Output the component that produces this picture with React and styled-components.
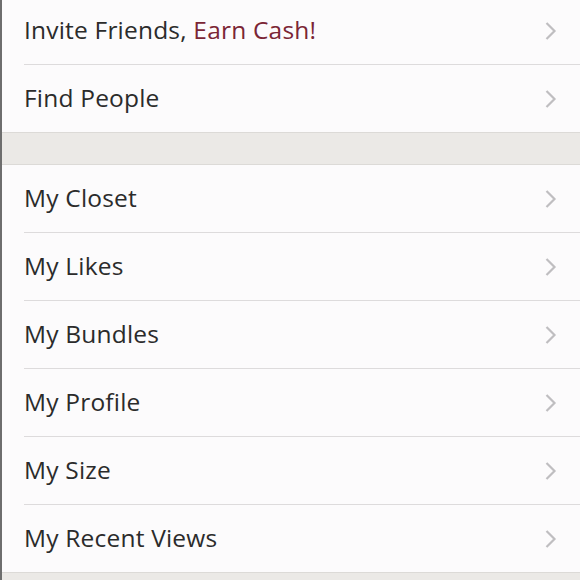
import React from 'react';
import styled, { createGlobalStyle } from 'styled-components';

const GlobalStyle = createGlobalStyle`
  html, body {
    margin: 0;
    padding: 0;
    background: #fcfbfc;
  }
  body {
    font-family: "Open Sans", "Liberation Sans", sans-serif;
    -webkit-font-smoothing: antialiased;
  }
`

const Screen = styled.div`
  width: 580px;
  height: 580px;
  overflow: hidden;
  box-sizing: border-box;
  border-left: 2px solid #6e6e6e;
  background: #fcfbfc;
  display: flex;
  flex-direction: column;
`

const Group = styled.div`
  display: flex;
  flex-direction: column;
  background: #fcfbfc;
  &:first-child {
    margin-top: -3px;
  }
`

const Spacer = styled.div`
  height: 31px;
  flex-shrink: 0;
  background-color: #ebe9e6;
  border-top: 1px solid #dcdad7;
  border-bottom: 1px solid #dcdad7;
`

const Row = styled.div`
  display: flex;
  align-items: center;
  height: 67px;
  flex-shrink: 0;
  padding-left: 22px;
  border-bottom: ${p => (p.last ? 'none' : '1px solid transparent')};
  position: relative;
  &::after {
    content: "";
    display: ${p => (p.last ? 'none' : 'block')};
    position: absolute;
    left: 22px;
    right: 0;
    bottom: -1px;
    height: 1px;
    background: #dddbdc;
  }
`

const Label = styled.div`
  flex: 1;
  font-size: 24.5px;
  color: #2b2b2b;
  letter-spacing: 0.2px;
  padding-bottom: 2px;
`

const Accent = styled.span`
  color: #7b2535;
`

const Chevron = styled.svg`
  width: 13px;
  height: 18px;
  margin-right: 23px;
  flex-shrink: 0;
`

const Arrow = () => (
  <Chevron viewBox="0 0 13 18">
    <path d="M2.5 1 L10.5 9 L2.5 17" fill="none" stroke="#bfbec0" strokeWidth="2.2" />
  </Chevron>
)

const Item = ({ children, last }) => (
  <Row last={last}>
    <Label>{children}</Label>
    <Arrow />
  </Row>
)

const myItems = ['My Closet', 'My Likes', 'My Bundles', 'My Profile', 'My Size', 'My Recent Views']

export default function App() {
  return (
    <Screen>
      <GlobalStyle />
      <Group>
        <Item>Invite Friends, <Accent>Earn Cash!</Accent></Item>
        <Item last>Find People</Item>
      </Group>
      <Spacer />
      <Group>
        {myItems.map((t, i) => (
          <Item key={t} last={i === myItems.length - 1}>{t}</Item>
        ))}
      </Group>
      <Spacer />
    </Screen>
  )
}
